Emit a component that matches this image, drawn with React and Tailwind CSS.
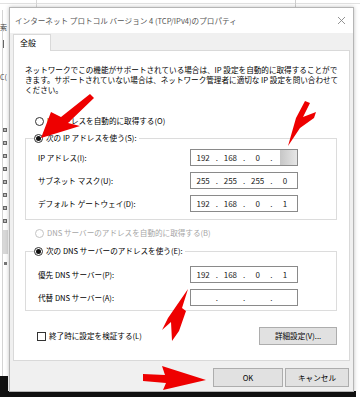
import React from 'react';

const font = "font-['Noto_Sans_CJK_JP','Noto_Sans',sans-serif]";

function Radio({ checked, disabled, label }) {
  return (
    <span className={`flex items-center gap-[3px] h-[12px] ${disabled ? 'text-[#a6a6a6]' : 'text-[#000]'}`}>
      <span
        className={`w-[9px] h-[9px] rounded-full border bg-white flex items-center justify-center ${
          disabled ? 'border-[#c4c4c4]' : 'border-[#333]'
        }`}
      >
        {checked && <span className="w-[5px] h-[5px] rounded-full bg-[#111]" />}
      </span>
      <span className="whitespace-nowrap">{label}</span>
    </span>
  );
}

function IpBox({ parts, masked }) {
  return (
    <div className="w-[108px] h-[17px] border border-[#8a8a8a] bg-white flex items-center text-[8px] text-[#222]">
      {parts.map((p, i) => (
        <React.Fragment key={i}>
          {i > 0 && <span className="w-[3px] text-center">.</span>}
          {masked && i === 3 ? (
            <span className="flex-1 h-full flex justify-end">
              <span className="w-[17px] h-full bg-gradient-to-r from-[#c6c6c6] via-[#d6d6d6] to-[#e6e6e6]" />
            </span>
          ) : (
            <span className="flex-1 text-center">{p}</span>
          )}
        </React.Fragment>
      ))}
    </div>
  );
}

function Row({ label, parts, masked }) {
  return (
    <div className="flex items-center h-[17px]">
      <span className="w-[152px] whitespace-nowrap">{label}</span>
      <IpBox parts={parts} masked={masked} />
    </div>
  );
}

export default function App() {
  return (
    <div className={`relative w-[360px] h-[400px] overflow-hidden bg-white text-[7.6px] leading-[10px] ${font}`}>
      {/* background window behind the dialog */}
      <div className="absolute inset-0">
        <div className="absolute left-0 top-[3px] w-[360px] h-px bg-[#e2e2e2]" />
        <div className="absolute left-[295px] top-0 w-px h-[7px] bg-[#cfcfcf]" />
        <div className="absolute left-[36px] top-0 w-px h-[7px] bg-[#d8d8d8]" />
        <div className="absolute left-[2px] top-[10px] w-px h-[370px] bg-[#d4d4d4]" />
        <div className="absolute left-0 top-[22px] text-[7px] text-[#444]">索</div>
        <div className="absolute left-[3px] top-[40px] w-px h-[8px] bg-[#666]" />
        <div className="absolute left-0 top-[72px] text-[7px] text-[#444]">C(</div>
        <div className="flex flex-col gap-[9px] absolute left-[3px] top-[128px]">
          {[0, 1, 2, 3, 4, 5, 6, 7, 8].map((i) => (
            <span key={i} className="w-[4px] h-[4px] border border-[#666] bg-[#bbb]" />
          ))}
        </div>
        <div className="absolute left-[3px] top-[230px] w-[5px] h-[24px] bg-[#d8d8d8]" />
        <div className="absolute left-[4px] top-[262px] w-[3px] h-[3px] bg-[#777]" />
        <div className="absolute left-0 top-[376px] w-[8px] h-[20px] bg-[#111]" />
        <div className="absolute left-0 top-[391px] w-[356px] h-[6px] bg-[#111]" />
      </div>

      {/* dialog */}
      <div className="absolute left-[9px] top-[7px] w-[345px] h-[385px] bg-[#f0f0f0] border border-[#b5b5b5] shadow-[0_0_4px_rgba(0,0,0,0.25)] flex flex-col">
        <div className="h-[25px] bg-white flex items-center justify-between pl-[5px] pr-[7px]">
          <span className="text-[#555] whitespace-nowrap">インターネット プロトコル バージョン 4 (TCP/IPv4)のプロパティ</span>
          <svg width="9" height="9" viewBox="0 0 9 9" className="text-[#888]">
            <path d="M1 1L8 8M8 1L1 8" stroke="currentColor" strokeWidth="0.9" />
          </svg>
        </div>

        <div className="px-[3px] flex flex-col">
          <div className="h-[18px] flex items-end">
            <div className="relative z-10 w-[38px] h-[17px] bg-white border border-b-0 border-[#d9d9d9] pl-[6px] flex items-center text-[8px] text-[#000]">
              全般
            </div>
          </div>
          <div className="h-[311px] -mt-px bg-white border border-[#d9d9d9] flex flex-col text-[#000]">
            <p className="pl-[11px] pt-[14px] whitespace-nowrap">
              ネットワークでこの機能がサポートされている場合は、IP 設定を自動的に取得することがで
              <br />
              きます。サポートされていない場合は、ネットワーク管理者に適切な IP 設定を問い合わせて
              <br />
              ください。
            </p>

            <div className="pl-[21px] mt-[20px]">
              <Radio label="IP アドレスを自動的に取得する(O)" />
            </div>

            <fieldset className="ml-[11px] w-[312px] mt-[5px] border border-[#dcdcdc] pb-[7px]">
              <legend className="ml-[8px] pr-[2px] bg-white">
                <Radio checked label="次の IP アドレスを使う(S):" />
              </legend>
              <div className="pl-[12px] pt-[5px] flex flex-col gap-[6px]">
                <Row label="IP アドレス(I):" parts={['192', '168', '0', '']} masked />
                <Row label="サブネット マスク(U):" parts={['255', '255', '255', '0']} />
                <Row label="デフォルト ゲートウェイ(D):" parts={['192', '168', '0', '1']} />
              </div>
            </fieldset>

            <div className="pl-[21px] mt-[7px]">
              <Radio disabled label="DNS サーバーのアドレスを自動的に取得する(B)" />
            </div>

            <fieldset className="ml-[11px] w-[312px] mt-[6px] border border-[#dcdcdc] pb-[4px]">
              <legend className="ml-[8px] pr-[2px] bg-white">
                <Radio checked label="次の DNS サーバーのアドレスを使う(E):" />
              </legend>
              <div className="pl-[12px] pt-[9px] flex flex-col gap-[6px]">
                <Row label="優先 DNS サーバー(P):" parts={['192', '168', '0', '1']} />
                <Row label="代替 DNS サーバー(A):" parts={['', '', '', '']} />
              </div>
            </fieldset>

            <div className="flex items-center justify-between pl-[23px] pr-[12px] mt-[16px]">
              <span className="flex items-center gap-[3px]">
                <span className="w-[9px] h-[9px] border border-[#333] bg-white" />
                <span className="whitespace-nowrap">終了時に設定を検証する(L)</span>
              </span>
              <button className="w-[78px] h-[18px] bg-[#e1e1e1] border border-[#adadad] text-[#000]">
                詳細設定(V)...
              </button>
            </div>
          </div>

          <div className="flex justify-end gap-[2px] pt-[7px] pr-[1px]">
            <button className="w-[70px] h-[19px] bg-[#e1e1e1] border border-[#adadad] text-[#000]">OK</button>
            <button className="w-[64px] h-[19px] bg-[#e1e1e1] border border-[#adadad] text-[#000]">キャンセル</button>
          </div>
        </div>
      </div>

      {/* red arrows drawn on the screenshot */}
      <svg className="absolute left-0 top-0 pointer-events-none" width="360" height="400" viewBox="0 0 360 400">
        <g fill="#ee0000">
          <polygon points="41,138 51,112 61,117 90,94 94,98 68,123 80,126" />
          <polygon points="288,146 296,118 305,101 310,103 303,117 316,112 314,118 300,128" />
          <polygon points="188,289 182,308 186,311 179,331 172,341 171,322 162,330 168,318" />
          <polygon points="143,374 165,375 162,366 206,380 163,390 166,383 143,381" />
        </g>
      </svg>
    </div>
  );
}
